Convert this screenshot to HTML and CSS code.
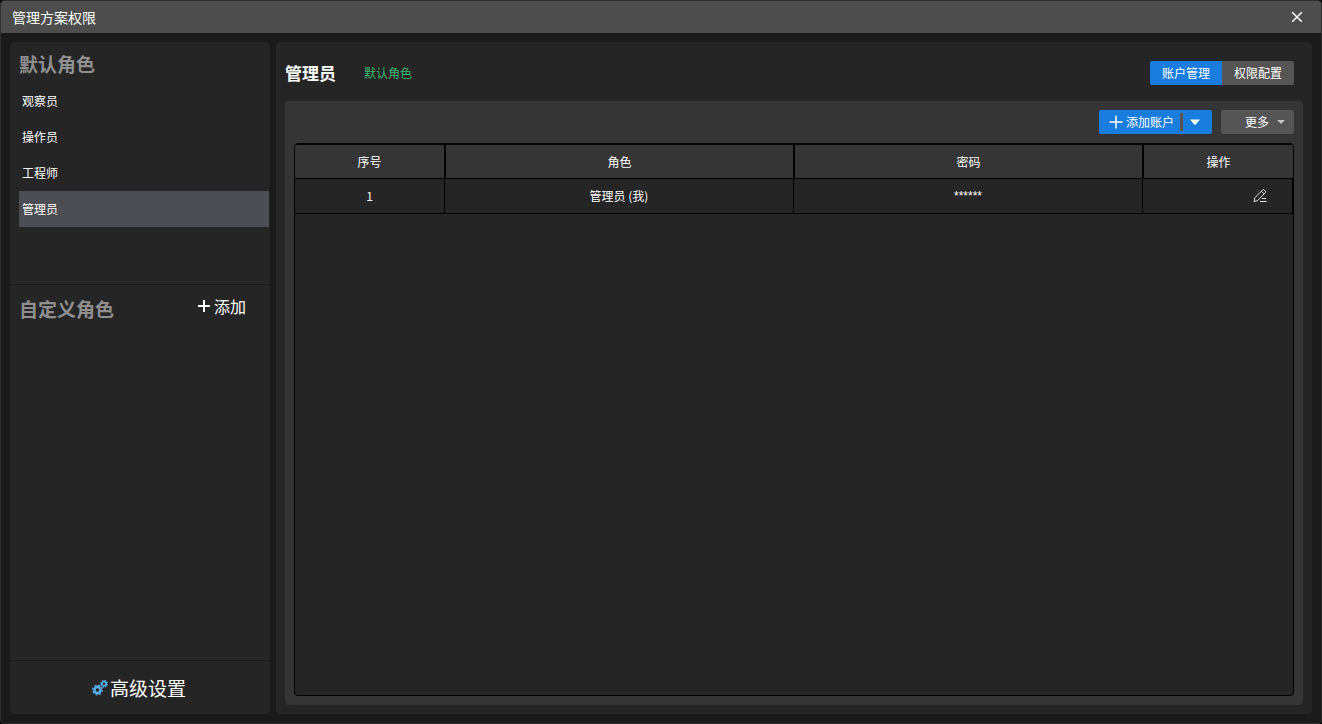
FILE: index.html
```html
<!DOCTYPE html>
<html lang="zh-CN">
<head>
<meta charset="utf-8">
<title>管理方案权限</title>
<link rel="stylesheet" href="styles.css">
</head>
<body>
<div class="window">
  <header class="titlebar">
    <h1 class="titlebar-text">管理方案权限</h1>
    <button class="close" type="button" aria-label="关闭">
      <svg width="12" height="12" viewBox="0 0 12 12" fill="none" stroke="#fff" stroke-width="1.5"><path d="M1.2 1.2l9.6 9.6M10.8 1.2L1.2 10.8"/></svg>
    </button>
  </header>
  <div class="body">
    <aside class="sidebar">
      <section class="roles">
        <h2 class="side-heading">默认角色</h2>
        <nav class="role-list">
          <button class="role" type="button">观察员</button>
          <button class="role" type="button">操作员</button>
          <button class="role" type="button">工程师</button>
          <button class="role selected" type="button" aria-current="true">管理员</button>
        </nav>
      </section>
      <section class="custom">
        <h2 class="side-heading">自定义角色</h2>
        <button class="add-role" type="button">
          <svg width="12" height="12" viewBox="0 0 12 12" fill="#fff"><path d="M5 0h2v5h5v2H7v5H5V7H0V5h5z"/></svg>
          <span>添加</span>
        </button>
      </section>
      <footer class="side-footer">
        <button class="advanced" type="button">
          <svg width="16" height="16" viewBox="0 0 16 16" fill="none" stroke="#55aeea">
            <circle cx="5.5" cy="10" r="3.100" stroke-width="2.6"/>
            <circle cx="5.5" cy="10" r="4.800" stroke-width="1.400" stroke-dasharray="1.9 1.87"/>
            <circle cx="12" cy="3.800" r="2.100" stroke-width="1.800"/>
            <circle cx="12" cy="3.800" r="3.300" stroke-width="1.300" stroke-dasharray="1.4 1.19"/>
          </svg>
          <span>高级设置</span>
        </button>
      </footer>
    </aside>
    <main class="main">
      <div class="main-head">
        <h2 class="role-name">管理员</h2>
        <span class="role-tag">默认角色</span>
        <div class="tabs">
          <button class="tab active" type="button">账户管理</button>
          <button class="tab" type="button">权限配置</button>
        </div>
      </div>
      <section class="card">
        <div class="toolbar">
          <div class="split">
            <button class="split-main" type="button">
              <svg width="14" height="14" viewBox="0 0 14 14" stroke="#fff" stroke-width="1.5"><path d="M7 .5v13M.5 7h13"/></svg>
              <span>添加账户</span>
            </button>
            <button class="split-arrow" type="button" aria-label="展开">
              <svg width="10" height="6" viewBox="0 0 10 6" fill="#fff"><path d="M0 .5h10L5.5 5.7h-1z"/></svg>
            </button>
          </div>
          <button class="more" type="button">
            <span>更多</span>
            <svg width="8" height="4" viewBox="0 0 8 4" fill="#c4c4c4"><path d="M0 0h8L4 4z"/></svg>
          </button>
        </div>
        <div class="table-box">
          <table class="accounts">
            <colgroup><col class="col-narrow"><col><col><col class="col-narrow"></colgroup>
            <thead>
              <tr><th>序号</th><th>角色</th><th>密码</th><th>操作</th></tr>
            </thead>
            <tbody>
              <tr>
                <td>1</td><td>管理员 (我)</td><td class="password">******</td>
                <td class="actions">
                  <button class="edit" type="button" aria-label="编辑">
                    <svg width="14" height="14" viewBox="0 0 14 14" fill="none" stroke="#e6e6e6"><path d="M1 12.6l.8-3.8L9.7.9q.7-.6 1.4 0l1.3 1.3q.6.7 0 1.4L4.6 11.6z M8.4 2.2l2.7 2.7"/><path d="M9 9.5h4M7 12.5h6.500"/></svg>
                  </button>
                </td>
              </tr>
            </tbody>
          </table>
        </div>
      </section>
    </main>
  </div>
</div>
</body>
</html>
```
FILE: styles.css
```css
* {
  box-sizing: border-box;
}

body {
  margin: 0;
  background: #000;
  color: #fff;
  font: 12px/18px "Noto Sans CJK SC", sans-serif;
}

h1,
h2 {
  margin: 0;
}

button {
  display: flex;
  align-items: center;
  margin: 0;
  padding: 0;
  border: 0;
  background: none;
  color: inherit;
  font: inherit;
  cursor: pointer;
}

svg {
  display: block;
  flex: none;
}

.window {
  display: flex;
  flex-direction: column;
  min-height: 100vh;
  border: 1px solid #2e2e2e;
  border-radius: 4px;
  background: #1a1a1a;
  overflow: hidden;
}

.titlebar {
  display: flex;
  align-items: center;
  justify-content: space-between;
  height: 32px;
  padding: 0 18px 0 11px;
  background: #4d4d4d;
}

.titlebar-text {
  font-size: 14px;
  font-weight: 400;
  line-height: 20px;
}

.body {
  display: flex;
  flex: 1;
  gap: 6px;
  padding: 9px;
}

.sidebar,
.main {
  display: flex;
  flex-direction: column;
  border-radius: 4px;
  background: #252525;
}

.sidebar {
  flex: none;
  width: 260px;
}

.roles {
  padding: 8px 1px 57px 9px;
  border-bottom: 1px solid #1a1a1a;
}

.side-heading {
  color: #8f8f8f;
  font-size: 19px;
  font-weight: 700;
  line-height: 28px;
}

.role-list {
  margin-top: 5px;
}

.role {
  width: 100%;
  height: 36px;
  padding: 0 3px;
}

.role.selected {
  background: #4d4e53;
}

.custom {
  display: flex;
  flex: 1;
  align-items: flex-start;
  justify-content: space-between;
  padding: 10px 24px 0 9px;
}

.add-role {
  gap: 4px;
  font-size: 16px;
  line-height: 22px;
}

.side-footer {
  display: flex;
  align-items: center;
  justify-content: center;
  height: 54px;
  padding-right: 2px;
  border-top: 1px solid #1a1a1a;
}

.advanced {
  gap: 2px;
  font-size: 19px;
  line-height: 28px;
}

.main {
  flex: 1;
  padding: 9px;
}

.main-head {
  display: flex;
  align-items: center;
  height: 44px;
  margin-bottom: 6px;
  padding-right: 9px;
}

.role-name {
  font-size: 17px;
  font-weight: 700;
  line-height: 24px;
}

.role-tag {
  margin-left: 28px;
  color: #3cb371;
}

.tabs {
  display: flex;
  margin-left: auto;
  border-radius: 2px;
  overflow: hidden;
}

.tab {
  justify-content: center;
  width: 72px;
  height: 24px;
  background: #555;
}

.tab.active {
  background: #187ddd;
}

.card {
  display: flex;
  flex: 1;
  flex-direction: column;
  gap: 9px;
  padding: 9px;
  border-radius: 4px;
  background: #353535;
}

.toolbar {
  display: flex;
  justify-content: flex-end;
  gap: 9px;
}

.split {
  display: flex;
  align-items: center;
  height: 24px;
  border-radius: 2px;
  background: #187ddd;
}

.split-main {
  gap: 3px;
  height: 18px;
  padding: 0 6px 0 10px;
  border-right: 3px solid #555;
}

.split-arrow {
  justify-content: center;
  width: 29px;
  height: 24px;
  padding-right: 5px;
}

.more {
  justify-content: flex-end;
  gap: 8px;
  width: 73px;
  height: 24px;
  padding-right: 9px;
  border-radius: 2px;
  background: #555;
}

.table-box {
  flex: 1;
  border: 1px solid #000;
  border-radius: 4px;
  background: #252525;
  overflow: hidden;
}

.accounts {
  width: 100%;
  border-spacing: 0;
  table-layout: fixed;
  text-align: center;
}

.col-narrow {
  width: 150px;
}

.accounts th,
.accounts td {
  height: 35px;
  padding: 0;
  border: 0 solid #000;
  border-right-width: 1px;
  border-bottom-width: 1px;
  font-weight: 400;
}

.accounts th {
  border-top-width: 1px;
  background: #353535;
}

.accounts th + th {
  border-left-width: 1px;
}

.accounts th:last-child {
  border-right-width: 0;
}

.accounts .password {
  font-family: "Liberation Sans", sans-serif;
}

.edit {
  margin: 0 25px 0 auto;
}
```
